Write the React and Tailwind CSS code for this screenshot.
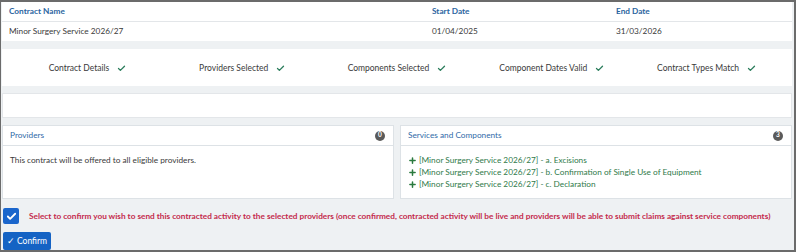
import { Check, Plus } from 'lucide-react'

const checks = [
  'Contract Details',
  'Providers Selected',
  'Components Selected',
  'Component Dates Valid',
  'Contract Types Match',
]

const components = [
  '[Minor Surgery Service 2026/27] - a. Excisions',
  '[Minor Surgery Service 2026/27] - b. Confirmation of Single Use of Equipment',
  '[Minor Surgery Service 2026/27] - c. Declaration',
]

function Badge({ count }) {
  return (
    <span className="flex h-[10px] w-[10px] items-center justify-center rounded-full bg-[#5a5a5a] text-[6.5px] font-bold leading-none text-white">
      {count}
    </span>
  )
}

function Panel({ title, count, children }) {
  return (
    <div className="flex-1 border border-[#dde2e6] bg-white">
      <div className="flex h-[20px] items-center justify-between border-b border-[#dde2e6] pr-[8px] pl-[7px]">
        <span className="text-[8.25px] text-[#2f6aa8]">{title}</span>
        <Badge count={count} />
      </div>
      <div className="h-[52px] px-[7px] pt-[8px]">{children}</div>
    </div>
  )
}

export default function App() {
  return (
    <div
      className="h-[252px] w-[796px] overflow-hidden border-t-2 border-r-2 border-b-2 border-l border-[#6b6b6b] bg-[#eef1f3] pr-[2px] pl-[1px] text-[#3a3a3a]"
      style={{ fontFamily: 'Lato, "Noto Sans", sans-serif' }}
    >
      <div className="bg-white">
        <div className="grid h-[20px] grid-cols-[423px_184px_1fr] items-center border-b border-[#e3e6e9] px-[7px] text-[8.25px] font-bold text-[#2a64a0]">
          <span>Contract Name</span>
          <span>Start Date</span>
          <span>End Date</span>
        </div>
        <div className="grid h-[19px] grid-cols-[423px_184px_1fr] items-center px-[7px] text-[8.25px]">
          <span>Minor Surgery Service 2026/27</span>
          <span>01/04/2025</span>
          <span>31/03/2026</span>
        </div>
      </div>

      <div className="mt-[8px] grid h-[37px] grid-cols-5 items-center bg-white px-[8px] pt-[2px] text-[8.5px]">
        {checks.map((label) => (
          <div key={label} className="flex items-center justify-center gap-[8px]">
            <span>{label}</span>
            <Check className="h-[9px] w-[9px] text-[#2b7d5c]" strokeWidth={3.5} />
          </div>
        ))}
      </div>

      <div className="mt-[7px] h-[25px] border border-[#e3e6e9] bg-white" />

      <div className="mt-[7px] flex gap-[6px]">
        <Panel title="Providers" count={0}>
          <p className="text-[8.25px]">This contract will be offered to all eligible providers.</p>
        </Panel>
        <Panel title="Services and Components" count={3}>
          <ul className="flex flex-col">
            {components.map((c) => (
              <li key={c} className="flex items-center gap-[2px] text-[8.25px] leading-[12px] text-[#2f7a4a]">
                <Plus className="h-[9px] w-[9px] text-[#2a7a3e]" strokeWidth={4} />
                <span>{c}</span>
              </li>
            ))}
          </ul>
        </Panel>
      </div>

      <div className="mt-[9px] flex items-center gap-[10px] pl-[1px]">
        <span className="flex h-[16px] w-[16px] shrink-0 items-center justify-center rounded-[2px] bg-[#1a66cc]">
          <Check className="h-[11px] w-[11px] text-white" strokeWidth={4} />
        </span>
        <span className="whitespace-nowrap text-[8.25px] font-bold text-[#c42a4c]">
          Select to confirm you wish to send this contracted activity to the selected providers (once confirmed, contracted activity will be live and providers will be able to submit claims against service components)
        </span>
      </div>

      <button className="mt-[8px] ml-[1px] flex h-[18px] items-center gap-[2px] rounded-[2px] bg-[#1463c4] px-[4px] text-[8.5px] text-white">
        <span>✓</span>
        <span>Confirm</span>
      </button>
    </div>
  )
}
